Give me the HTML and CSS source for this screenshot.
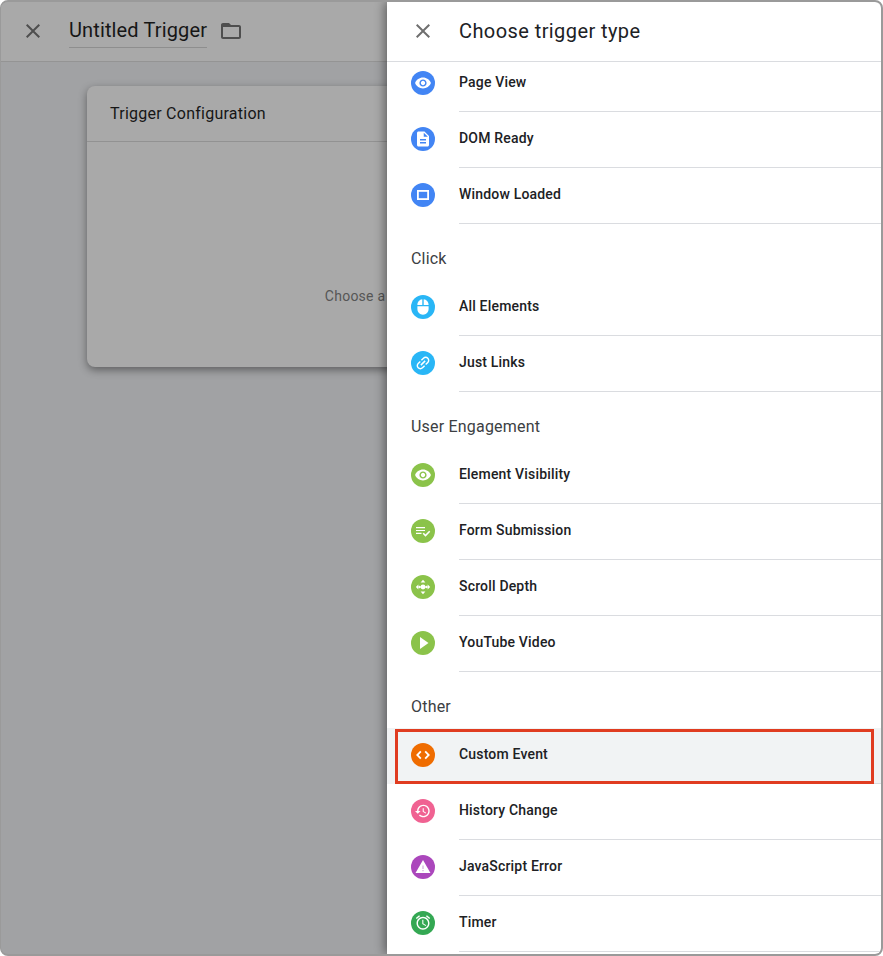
FILE: index.html
```html
<!DOCTYPE html>
<html lang="en">
<head>
<meta charset="utf-8">
<title>Choose trigger type</title>
<link rel="stylesheet" href="styles.css">
</head>
<body>
<div class="frame">
  <div class="editor">
    <header class="editor-head">
      <svg class="ico-24 ico-dim" viewBox="0 0 24 24"><path d="M19 6.41L17.59 5 12 10.59 6.41 5 5 6.41 10.59 12 5 17.59 6.41 19 12 13.41 17.59 19 19 17.59 13.41 12 19 6.41z"/></svg>
      <span class="trigger-name">Untitled Trigger</span>
      <svg class="ico-24 ico-dim" viewBox="0 0 24 24"><path d="M20 6h-8l-2-2H4c-1.1 0-1.99.9-1.99 2L2 18c0 1.1.9 2 2 2h16c1.1 0 2-.9 2-2V8c0-1.1-.9-2-2-2zm0 12H4V8h16v10z"/></svg>
    </header>
    <section class="card">
      <h2 class="card-title">Trigger Configuration</h2>
      <div class="card-body">Choose a trigger type to begin setup...</div>
    </section>
  </div>
  <aside class="panel">
    <header class="panel-head">
      <svg class="ico-24 ico-close" viewBox="0 0 24 24"><path d="M19 6.41L17.59 5 12 10.59 6.41 5 5 6.41 10.59 12 5 17.59 6.41 19 12 13.41 17.59 19 19 17.59 13.41 12 19 6.41z"/></svg>
      <h1 class="panel-title">Choose trigger type</h1>
    </header>
    <div class="list">
      <div class="list-inner">
        <div class="row"><svg class="badge blue" viewBox="0 0 24 24"><circle class="disc" cx="12" cy="12" r="12"/><path class="glyph" transform="translate(3.360 3.360) scale(.72)" d="M12 4.5C7 4.5 2.73 7.61 1 12c1.73 4.39 6 7.5 11 7.5s9.27-3.11 11-7.5c-1.73-4.39-6-7.5-11-7.5zM12 17c-2.76 0-5-2.24-5-5s2.24-5 5-5 5 2.24 5 5-2.24 5-5 5zm0-8c-1.66 0-3 1.34-3 3s1.34 3 3 3 3-1.34 3-3-1.34-3-3-3z"/></svg><span class="label">Page View</span></div>
        <div class="row"><svg class="badge blue" viewBox="0 0 24 24"><circle class="disc" cx="12" cy="12" r="12"/><path class="glyph" transform="translate(3 3) scale(.75)" d="M14 2H6c-1.1 0-1.99.9-1.99 2L4 20c0 1.1.89 2 1.99 2H18c1.1 0 2-.9 2-2V8l-6-6zm2 16H8v-2h8v2zm0-4H8v-2h8v2zm-3-5V3.5L18.5 9H13z"/></svg><span class="label">DOM Ready</span></div>
        <div class="row"><svg class="badge blue" viewBox="0 0 24 24"><circle class="disc" cx="12" cy="12" r="12"/><rect class="line" x="6.900" y="7.900" width="10.200" height="8.200" stroke-width="1.800"/></svg><span class="label">Window Loaded</span></div>

        <h3 class="section">Click</h3>
        <div class="row"><svg class="badge sky" viewBox="0 0 24 24"><circle class="disc" cx="12" cy="12" r="12"/><path class="glyph" transform="translate(3.600 3.600) scale(.7)" d="M13 1.07V9h7c0-4.08-3.05-7.44-7-7.93zM4 15c0 4.42 3.58 8 8 8s8-3.58 8-8v-4H4v4zm7-13.93C7.05 1.56 4 4.92 4 9h7V1.07z"/></svg><span class="label">All Elements</span></div>
        <div class="row"><svg class="badge sky" viewBox="0 0 24 24"><circle class="disc" cx="12" cy="12" r="12"/><path class="glyph" transform="rotate(-45 12 12) translate(3 3) scale(.75)" d="M3.900 12c0-1.710 1.390-3.100 3.100-3.100h4V7H7c-2.760 0-5 2.240-5 5s2.240 5 5 5h4v-1.900H7c-1.710 0-3.100-1.390-3.100-3.100zM8 13h8v-2H8v2zm9-6h-4v1.900h4c1.710 0 3.100 1.390 3.100 3.100s-1.390 3.100-3.100 3.100h-4V17h4c2.760 0 5-2.240 5-5s-2.240-5-5-5z"/></svg><span class="label">Just Links</span></div>

        <h3 class="section">User Engagement</h3>
        <div class="row"><svg class="badge lime" viewBox="0 0 24 24"><circle class="disc" cx="12" cy="12" r="12"/><path class="glyph" transform="translate(3.360 3.360) scale(.72)" d="M12 4.5C7 4.5 2.73 7.61 1 12c1.73 4.39 6 7.5 11 7.5s9.27-3.11 11-7.5c-1.73-4.39-6-7.5-11-7.5zM12 17c-2.76 0-5-2.24-5-5s2.24-5 5-5 5 2.24 5 5-2.24 5-5 5zm0-8c-1.66 0-3 1.34-3 3s1.34 3 3 3 3-1.34 3-3-1.34-3-3-3z"/></svg><span class="label">Element Visibility</span></div>
        <div class="row"><svg class="badge lime" viewBox="0 0 24 24"><circle class="disc" cx="12" cy="12" r="12"/><path class="glyph" d="M5 8h9v1.200H5zM5 10.900h9v1.200H5zM5 13.800h5.500V15H5z"/><path class="line" stroke-width="1.600" d="M12.200 14.200l2.300 2.300 4.200-4.200"/></svg><span class="label">Form Submission</span></div>
        <div class="row"><svg class="badge lime" viewBox="0 0 24 24"><circle class="disc" cx="12" cy="12" r="12"/><path class="glyph" d="M12 4.800l2.400 2.600H9.600zM12 19.200l-2.400-2.600h4.800zM4.800 12l2.600-2.400v4.800zM19.200 12l-2.600 2.400V9.600z"/><circle class="glyph" cx="12" cy="12" r="2.400"/><circle class="glyph" cx="8.600" cy="12" r="1.300"/><circle class="glyph" cx="15.400" cy="12" r="1.300"/></svg><span class="label">Scroll Depth</span></div>
        <div class="row"><svg class="badge lime" viewBox="0 0 24 24"><circle class="disc" cx="12" cy="12" r="12"/><path class="glyph" d="M9 6v12l8.500-6z"/></svg><span class="label">YouTube Video</span></div>

        <h3 class="section">Other</h3>
        <div class="row selected"><svg class="badge orange" viewBox="0 0 24 24"><circle class="disc" cx="12" cy="12" r="12"/><path class="line" stroke-width="1.800" d="M9.800 8.400L6.300 12l3.500 3.600M14.200 8.400l3.500 3.600-3.500 3.600"/></svg><span class="label">Custom Event</span></div>
        <div class="row"><svg class="badge pink" viewBox="0 0 24 24"><circle class="disc" cx="12" cy="12" r="12"/><path class="glyph" transform="translate(3.300 3.600) scale(.7)" d="M13 3c-4.970 0-9 4.030-9 9H1l3.890 3.890.07.14L9 12H6c0-3.870 3.130-7 7-7s7 3.130 7 7-3.130 7-7 7c-1.930 0-3.680-.79-4.940-2.060l-1.420 1.420C8.270 19.990 10.510 21 13 21c4.970 0 9-4.030 9-9s-4.030-9-9-9zm-1 5v5l4.280 2.540.72-1.210-3.500-2.080V8H12z"/></svg><span class="label">History Change</span></div>
        <div class="row"><svg class="badge purple" viewBox="0 0 24 24"><circle class="disc" cx="12" cy="12" r="12"/><path class="glyph" transform="translate(3.840 3.600) scale(.68)" d="M1 21h22L12 2 1 21z"/><path class="mark" d="M11.500 10.500h1v3.500h-1zM11.500 15h1v1.200h-1z"/></svg><span class="label">JavaScript Error</span></div>
        <div class="row"><svg class="badge green" viewBox="0 0 24 24"><circle class="disc" cx="12" cy="12" r="12"/><path class="glyph" transform="translate(3.360 2.900) scale(.72)" d="M22 5.720l-4.600-3.860-1.290 1.530 4.600 3.860L22 5.720zM7.880 3.390L6.600 1.860 2 5.710l1.290 1.530 4.590-3.850zM12.500 8H11v6l4.750 2.850.75-1.230-4-2.370V8zM12 4c-4.970 0-9 4.030-9 9s4.020 9 9 9c4.970 0 9-4.030 9-9s-4.030-9-9-9zm0 16c-3.870 0-7-3.130-7-7s3.130-7 7-7 7 3.130 7 7-3.130 7-7 7z"/></svg><span class="label">Timer</span></div>
      </div>
    </div>
  </aside>
</div>
</body>
</html>
```

FILE: styles.css
```css
* { box-sizing: border-box; }
html, body { margin: 0; height: 100%; background: #fff; }
body { font-family: Roboto, "Liberation Sans", sans-serif; color: #202124; overflow: hidden; }

.frame {
  display: flex;
  height: 956px;
  border: solid #9a9a9a;
  border-width: 2px 2px 2px 1px;
  border-radius: 8px;
  overflow: hidden;
  background: #a1a2a4;
}

.editor { flex: 1; min-width: 0; overflow: hidden; }
.editor-head {
  display: flex;
  align-items: center;
  height: 60px;
  padding: 0 0 2px 20px;
  background: #a9a9a9;
  border-bottom: 1px solid #949494;
}
.ico-24 { width: 24px; height: 24px; flex: none; }
.ico-dim { fill: #4e4e4e; }
.trigger-name {
  margin: 0 12px 0 24px;
  padding: 2px 0 3px;
  font-size: 20px;
  line-height: 28px;
  letter-spacing: .13px;
  color: #161616;
  border-bottom: 1px solid #8e8e8e;
}
.card {
  width: 709px;
  height: 281px;
  margin: 24px 0 0 86px;
  background: #a9a9a9;
  border-radius: 8px;
  box-shadow: 0 3px 8px rgba(0, 0, 0, .42);
}
.card-title {
  margin: 0;
  height: 56px;
  padding: 0 23px;
  font-size: 16px;
  font-weight: 400;
  line-height: 55px;
  letter-spacing: .25px;
  color: #161616;
  border-bottom: 1px solid #929292;
}
.card-body {
  height: 225px;
  padding: 144px 0 0 12px;
  font-size: 14px;
  line-height: 20px;
  letter-spacing: .25px;
  text-align: center;
  color: #565656;
}

.panel {
  display: flex;
  flex-direction: column;
  flex: none;
  width: 494px;
  background: #fff;
  box-shadow: -2px 0 10px rgba(0, 0, 0, .45);
  position: relative;
}
.panel-head {
  display: flex;
  align-items: center;
  flex: none;
  height: 60px;
  padding: 0 0 2px 24px;
  border-bottom: 1px solid #dadce0;
}
.ico-close { fill: #6f6f6f; }
.panel-title {
  margin: 0 0 0 24px;
  font-size: 20px;
  font-weight: 400;
  line-height: 28px;
  letter-spacing: .42px;
  color: #202124;
}
.list { flex: 1; min-height: 0; overflow: hidden; }
.list-inner { margin-top: -6px; }
.section {
  margin: 0;
  height: 56px;
  padding: 23px 24px 0;
  font-size: 16px;
  font-weight: 400;
  line-height: 24px;
  letter-spacing: .2px;
  color: #3c4043;
}
.row {
  display: flex;
  align-items: flex-start;
  height: 56px;
  padding-left: 24px;
  position: relative;
}
.badge { width: 24px; height: 24px; flex: none; margin: 15px 24px 0 0; }
.disc { fill: currentColor; }
.glyph { fill: #fff; }
.line { fill: none; stroke: #fff; }
.mark { fill: #c79bd6; }
.blue { color: #4285f4; }
.sky { color: #29b6f6; }
.lime { color: #8bc34a; }
.orange { color: #ef6c00; }
.pink { color: #f06292; }
.purple { color: #ab47bc; }
.green { color: #34a853; }
.label {
  flex: 1;
  align-self: stretch;
  font-size: 14px;
  font-weight: 500;
  line-height: 53px;
  letter-spacing: .18px;
  color: #202124;
  border-bottom: 1px solid #dadce0;
}
.selected { background: #f1f3f4; }
.selected::after {
  content: "";
  position: absolute;
  left: 8px;
  right: 7px;
  top: 1px;
  bottom: 0;
  border: 3px solid #e03c20;
}
```
